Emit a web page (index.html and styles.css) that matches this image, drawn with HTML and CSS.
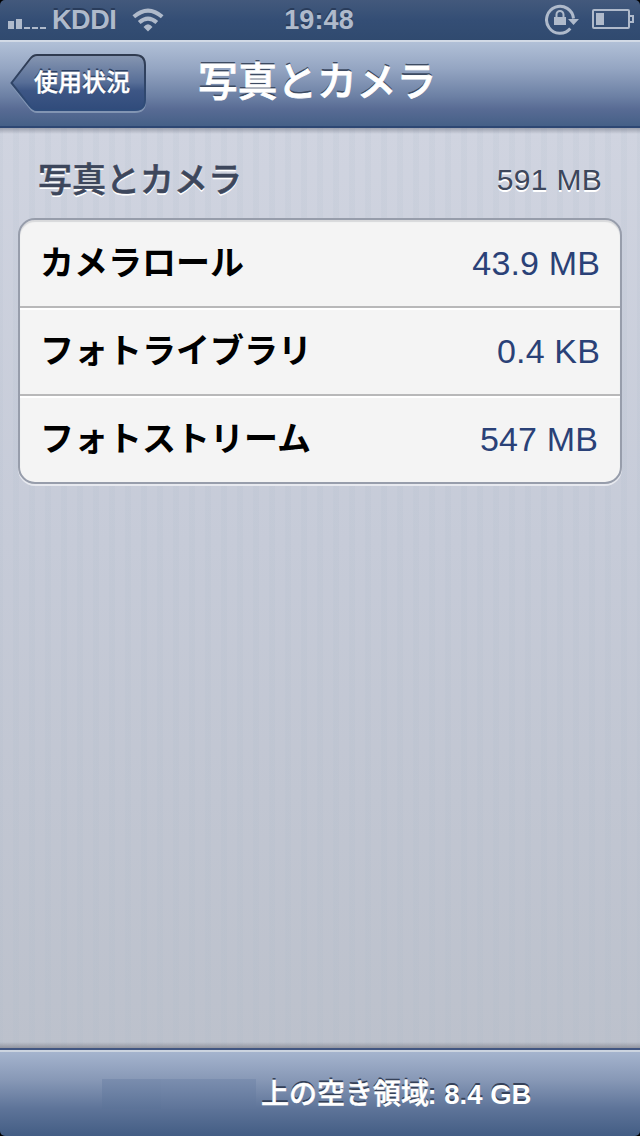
FILE: index.html
```html
<!DOCTYPE html>
<html lang="ja">
<head>
<meta charset="utf-8">
<title>写真とカメラ</title>
<link rel="stylesheet" href="styles.css">
</head>
<body>
<div class="screen">
  <header class="status">
    <div class="carrier">
      <svg class="signal" width="39" height="12" viewBox="0 0 39 12"><path d="M0 4h6v8H0zM8 2h6v10H8zM16 10h6v2h-6zM24 10h6v2h-6zM32 10h6v2h-6z"/></svg>
      <span class="carrier-name">KDDI</span>
      <svg class="wifi" width="32" height="24" viewBox="0 0 32 24"><g fill="none" stroke="#afbacb" stroke-width="4"><path d="M1.800 8.800Q16-3.600 30.200 8.800"/><path d="M7.200 14.600Q16 6.600 24.800 14.600"/></g><path d="M11.500 19Q16 13.500 20.500 19L16 23.500Z"/></svg>
    </div>
    <span class="clock">19:48</span>
    <div class="indicators">
      <svg width="35" height="32" viewBox="0 0 35 32"><path d="M25.300 25.600A13.500 13.500 0 1 1 28.500 15.500" fill="none" stroke="#afbacb" stroke-width="3"/><path d="M23 16h11l-5.500 6z"/><path d="M11.500 14v-2.500a3.500 3.500 0 0 1 7 0V14" fill="none" stroke="#afbacb" stroke-width="2"/><rect x="9" y="14" width="12" height="8"/></svg>
      <svg width="42" height="21" viewBox="0 0 42 21"><rect x="1" y="1" width="36" height="18" rx="1" fill="none" stroke="#afbacb" stroke-width="2"/><rect x="4" y="4" width="8" height="12"/><path d="M38 7h3v6h-3" fill="none" stroke="#afbacb" stroke-width="2"/></svg>
    </div>
  </header>
  <nav class="navbar">
    <div class="back">
      <svg class="back-shape" width="138" height="61" viewBox="0 0 138 61">
        <defs><linearGradient id="fill" x1="0" y1="0" x2="0" y2="1"><stop offset="0" stop-color="#8797b2"/><stop offset=".5" stop-color="#576e97"/><stop offset=".65" stop-color="#3d5685"/><stop offset="1" stop-color="#304b7b"/></linearGradient>
        <linearGradient id="edge" x1="0" y1="0" x2="0" y2="1"><stop offset="0" stop-color="#303b50"/><stop offset="1" stop-color="#2f4d7c"/></linearGradient></defs>
        <path d="M27 2.500H125Q135 2.500 135 12.500V48Q135 58 125 58H27Q23 58 20 54L1 30L20 6.500Q23 2.500 27 2.500Z" fill="none" stroke="#8295b3" stroke-width="2"/>
        <path d="M27 1H125Q135 1 135 11V46Q135 56 125 56H27Q23 56 20 52L1.500 29L20 5Q23 1 27 1Z" fill="url(#fill)" stroke="url(#edge)" stroke-width="2"/>
      </svg>
      <span class="back-label">使用状況</span>
    </div>
    <h1 class="title">写真とカメラ</h1>
  </nav>
  <main class="content">
    <div class="section-head"><h2 class="section-title">写真とカメラ</h2><span class="total">591 MB</span></div>
    <div class="list">
      <div class="row"><span class="name">カメラロール</span><span class="size">43.9 MB</span></div>
      <div class="row"><span class="name">フォトライブラリ</span><span class="size">0.4 KB</span></div>
      <div class="row"><span class="name">フォトストリーム</span><span class="size size-last">547 MB</span></div>
    </div>
  </main>
  <footer class="toolbar">
    <div class="patch"><span class="patch-left"></span><span class="patch-right"></span></div>
    <span class="free">上の空き領域<span class="free-value">: 8.4 GB</span></span>
  </footer>
</div>
</body>
</html>
```
FILE: styles.css
```css
* { box-sizing: border-box; }
body { margin: 0; background: #000; }
svg { display: block; fill: #afbacb; }
.screen {
  width: 640px; height: 1136px; overflow: hidden;
  display: flex; flex-direction: column;
  border-radius: 5px;
  font-family: "Liberation Sans", "Noto Sans CJK JP", sans-serif;
}
.status {
  height: 40px; flex: none;
  display: grid; grid-template-columns: 1fr auto 1fr;
  background: linear-gradient(#43597c, #344e75 50%, #304a6f);
  color: #afbacb;
  font-weight: 700; font-size: 27px; line-height: 40px;
  text-shadow: 0 -2px 0 #293c5b;
}
.carrier { display: flex; padding-left: 8px; }
.signal { margin-top: 17px; }
.carrier-name { width: 64px; margin-left: 5px; font-size: 27px; letter-spacing: -.4px; white-space: nowrap; }
.wifi { margin: 8px 0 0 16px; }
.clock { padding-right: 2px; letter-spacing: .1px; }
.indicators { display: flex; justify-content: flex-end; gap: 12px; padding: 3px 6px 0 0; }
.indicators svg + svg { margin-top: 6px; }
.navbar {
  height: 88px; flex: none;
  display: grid; grid-template-columns: 188px 1fr;
  padding-left: 10px;
  border-top: 2px solid #d2dae6; border-bottom: 2px solid #2d4773;
  background: linear-gradient(#b1c0d7, #94a5c2 32%, #6c80a4 65%, #586b94 80%, #456087);
}
.back { display: grid; margin-top: 12px; height: 61px; width: 138px; }
.back-shape, .back-label { grid-area: 1 / 1; }
.back-label {
  padding-left: 24px; z-index: 1;
  font-family: "Noto Sans CJK JP", sans-serif;
  font-size: 24px; font-weight: 500; line-height: 54px; color: #fff;
  -webkit-text-stroke: .4px;
  text-shadow: 0 -2px 0 #2e4163;
}
.title {
  margin: 0;
  font: 500 39.700px/74px "Noto Sans CJK JP", sans-serif;
  -webkit-text-stroke: .8px;
  color: #fff; text-shadow: 0 -2px 0 #3d4b62;
}
.content {
  flex: 1; padding: 21px 18px 0;
  background:
    linear-gradient(rgba(105,110,125,.5), rgba(105,110,125,0)) top / 100% 6px no-repeat,
    linear-gradient(rgba(105,105,115,0), rgba(105,105,115,.5)) bottom / 100% 6px no-repeat,
    repeating-linear-gradient(90deg, rgba(170,185,200,.12) 0 3px, transparent 3px 13px, rgba(170,185,200,.12) 13px 16px),
    linear-gradient(#d0d4e0, #c6cbd8 45%, #bcc1cc);
}
.section-head {
  height: 69px; display: flex; justify-content: space-between; padding: 0 20px 0 20px;
  color: #3d475c; text-shadow: 0 2px 0 #fff;
}
.section-title { margin: 0; font: 500 34px/58px "Noto Sans CJK JP", sans-serif; -webkit-text-stroke: .6px; }
.total { font-size: 30px; line-height: 61px; letter-spacing: .3px; }
.list {
  height: 266px; border: 2px solid #979dab; border-radius: 17px; overflow: hidden;
  background: #f4f4f4; box-shadow: 0 2px 0 #e7e9ef, inset 0 2px 1px #d8d9db;
}
.row { height: 88px; display: flex; justify-content: space-between; padding: 0 20px; }
.row:first-child { height: 86px; }
.row + .row { border-top: 2px solid #b8b8b9; box-shadow: inset 0 2px 0 #fff; }
.name { font: 700 34px/82px "Noto Sans CJK JP", sans-serif; color: #000; }
.size { font-size: 34px; line-height: 87px; letter-spacing: .15px; color: #2a4177; }
.size-last { margin-right: 2px; }
.toolbar {
  height: 88px; flex: none; display: flex; padding-left: 102px;
  border-top: 2px solid #425681;
  background: linear-gradient(#ccd4e0 0 2px, #a5b4ce 2px, #8798b6 35%, #5e7499 68%, #435d84);
}
.patch { display: flex; width: 159px; padding-top: 29px; }
.patch span { height: 30px; }
.patch-left { width: 59px; background: linear-gradient(#7a8dae, #5c7398); }
.patch-right { width: 95px; background: linear-gradient(#7b8eaf, #5e7499); }
.free {
  font-family: "Noto Sans CJK JP", sans-serif; font-size: 28px; font-weight: 500; line-height: 84px;
  -webkit-text-stroke: .5px;
  color: #fff; text-shadow: 0 -2px 0 #354158; white-space: nowrap;
}
.free-value { margin-left: -1.500px; font-family: "Liberation Sans", sans-serif; font-weight: 700; font-size: 27.500px; -webkit-text-stroke: 0; }
```
